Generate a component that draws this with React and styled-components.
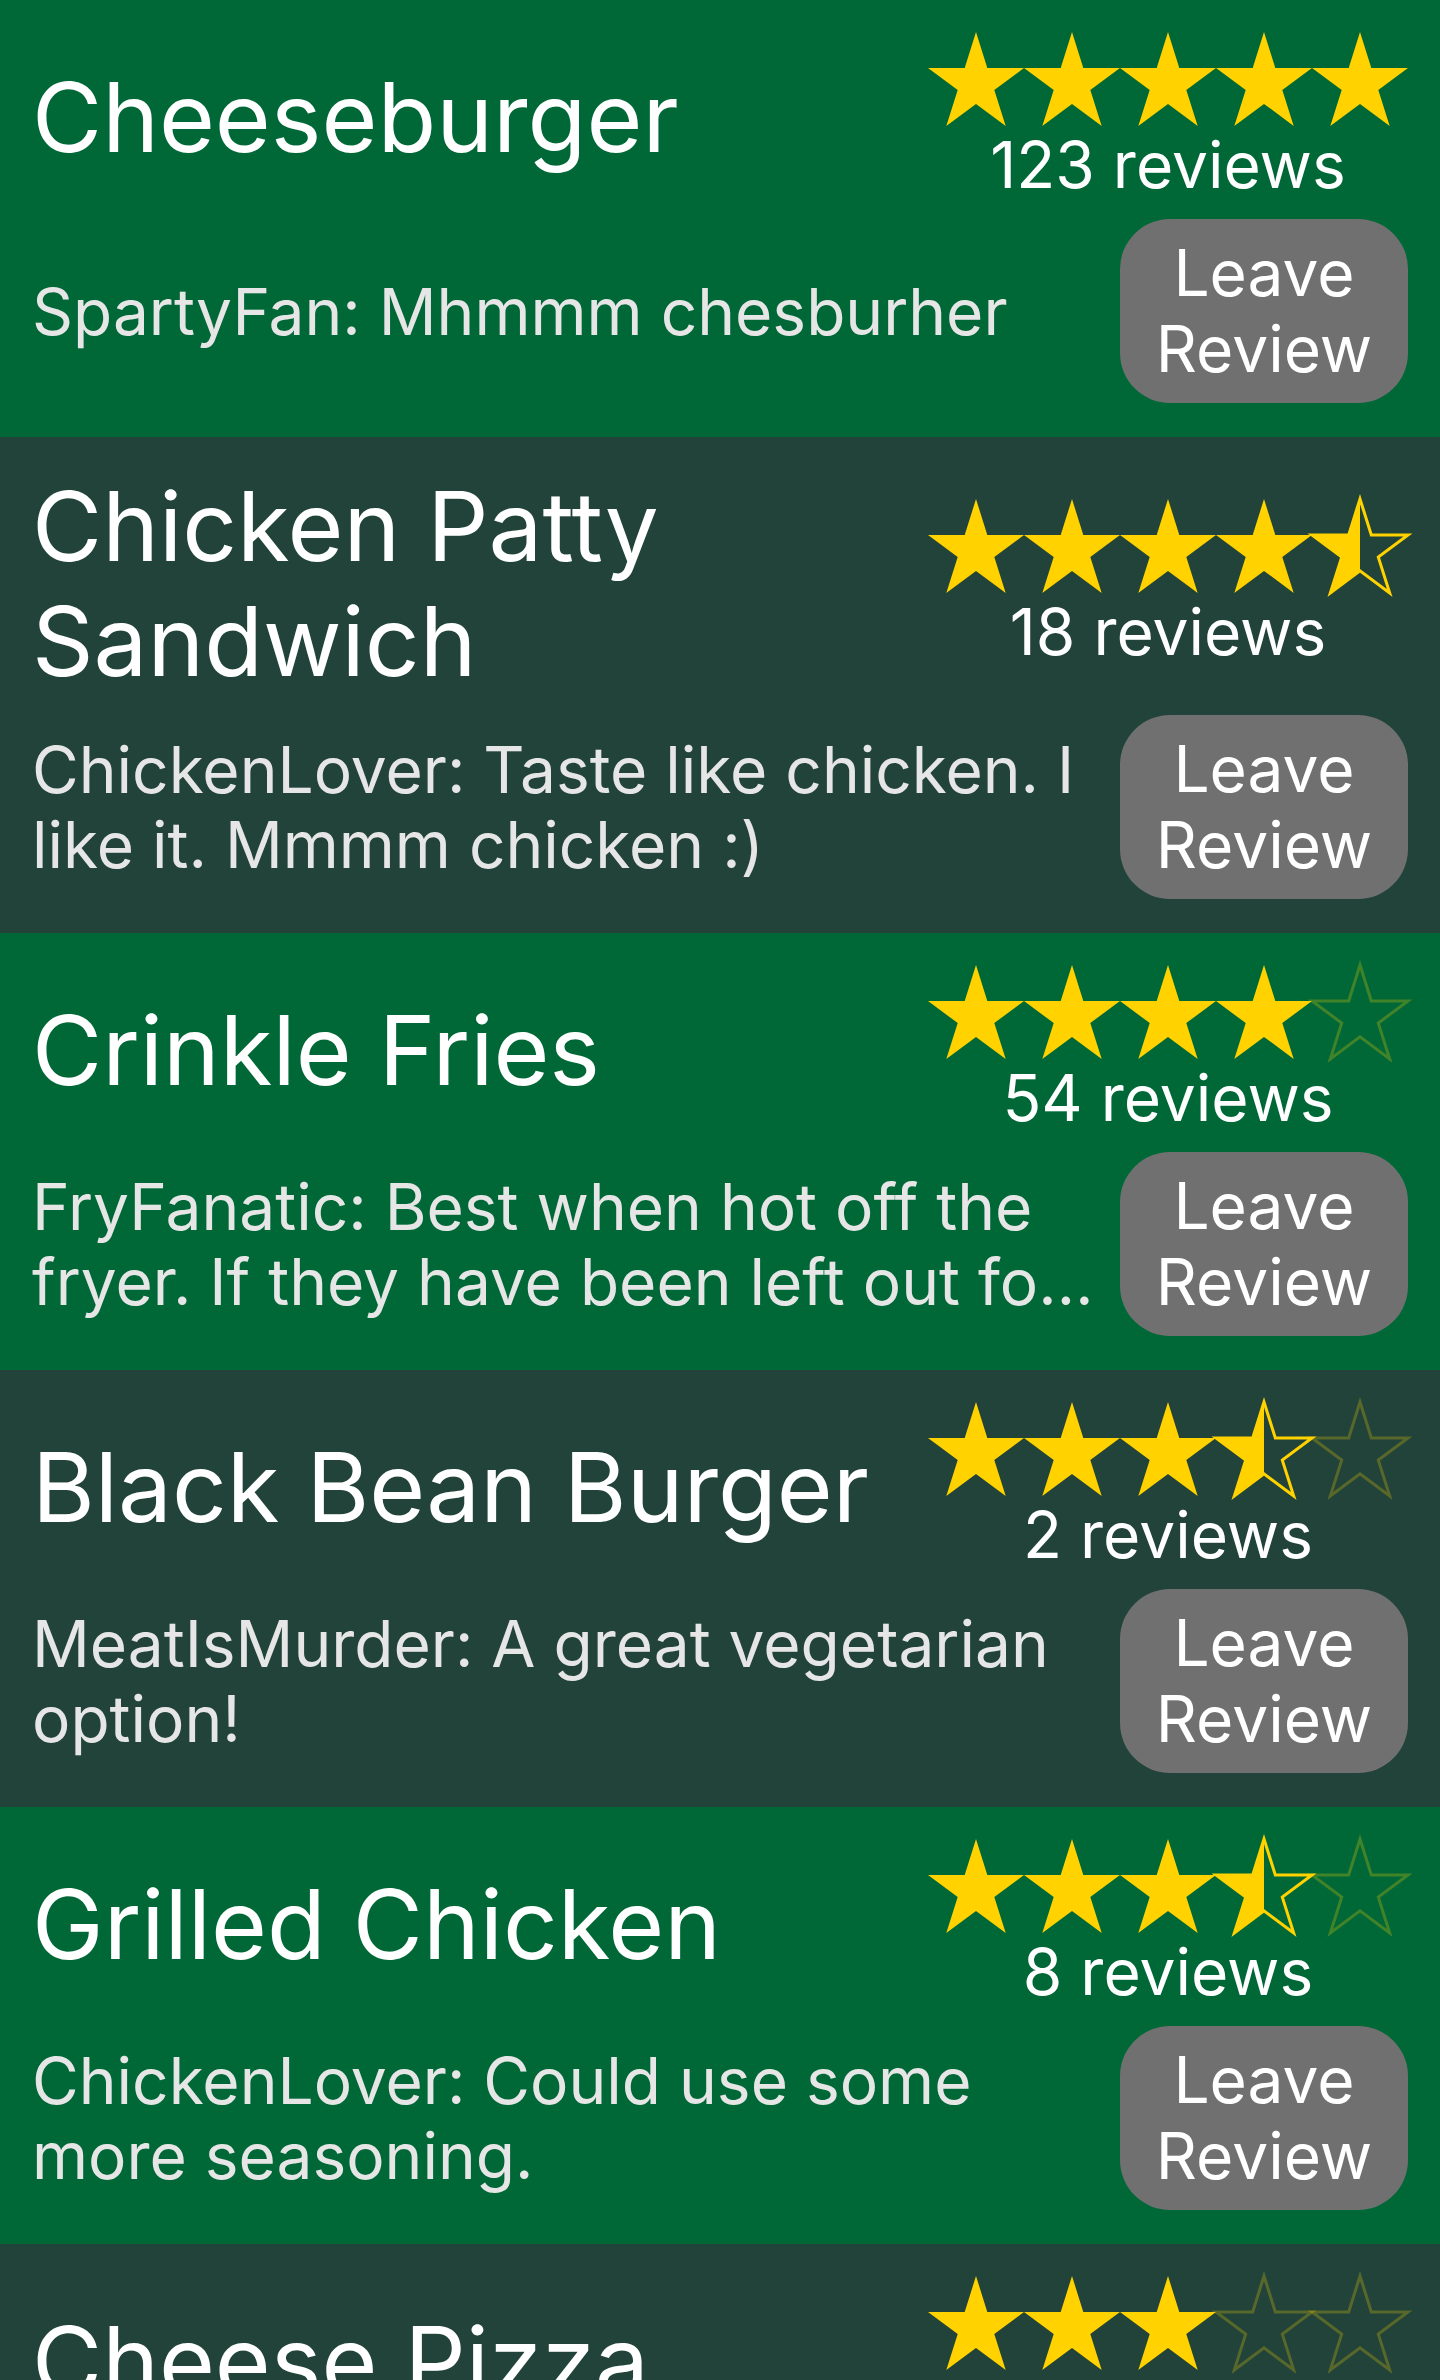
import React from 'react'
import styled, { createGlobalStyle } from 'styled-components'

const GlobalStyle = createGlobalStyle`
  body {
    margin: 0;
    font-family: Inter, "Noto Sans", sans-serif;
    background: #214339;
  }
`

const List = styled.div`
  display: flex;
  flex-direction: column;
`

const Item = styled.div`
  display: flex;
  flex-direction: column;
  gap: 16px;
  padding: 32px 32px 34px 32px;
  background: ${props => (props.$dark ? '#214339' : '#006837')};
`

const TopRow = styled.div`
  display: flex;
  align-items: center;
  justify-content: space-between;
  gap: 24px;
`

const Title = styled.h2`
  flex: 1;
  margin: 0;
  font-size: 96px;
  font-weight: 400;
  line-height: 1.2;
  color: #ffffff;
`

const Rating = styled.div`
  display: flex;
  flex-direction: column;
  align-items: center;
`

const Stars = styled.div`
  display: flex;
  height: 94px;
`

const Count = styled.div`
  font-size: 64px;
  line-height: 77px;
  color: #ffffff;
`

const BottomRow = styled.div`
  display: flex;
  align-items: center;
  gap: 24px;
`

const Review = styled.p`
  flex: 1;
  margin: 0;
  font-size: 64px;
  line-height: 75px;
  color: #e6e6e6;
  display: -webkit-box;
  -webkit-line-clamp: 2;
  -webkit-box-orient: vertical;
  overflow: hidden;
`

const ReviewButton = styled.button`
  width: 288px;
  height: 184px;
  padding: 0 20px;
  border: none;
  border-radius: 50px;
  background: #707070;
  color: #ffffff;
  font-family: Inter, "Noto Sans", sans-serif;
  font-size: 64px;
  line-height: 76px;
  text-align: center;
  cursor: pointer;
`

const GOLD = '#ffd200'
const POINTS =
  '48,0 59.3,35.9 96,35.9 66.3,58.1 77.7,94 48,71.9 18.3,94 29.7,58.1 0,35.9 36.7,35.9'

function Star({ kind, id }) {
  return (
    <svg width="96" height="94" viewBox="0 0 96 94" style={{ overflow: 'visible' }}>
      {kind === 'full' && <polygon points={POINTS} fill={GOLD} />}
      {kind === 'empty' && (
        <polygon points={POINTS} fill="none" stroke={GOLD} strokeOpacity="0.25" strokeWidth="3" />
      )}
      {kind === 'half' && (
        <>
          <defs>
            <clipPath id={id}>
              <rect x="0" y="0" width="48" height="94" />
            </clipPath>
          </defs>
          <polygon points={POINTS} fill={GOLD} clipPath={`url(#${id})`} />
          <polygon points={POINTS} fill="none" stroke={GOLD} strokeWidth="3" />
        </>
      )}
    </svg>
  )
}

function StarRow({ rating, name }) {
  const stars = []
  for (let i = 1; i <= 5; i++) {
    let kind = 'empty'
    if (rating >= i) kind = 'full'
    else if (rating >= i - 0.5) kind = 'half'
    stars.push(<Star key={i} kind={kind} id={`half-${name}-${i}`} />)
  }
  return <Stars>{stars}</Stars>
}

const foods = [
  { name: 'Cheeseburger', rating: 5, reviews: 123, review: 'SpartyFan: Mhmmm chesburher' },
  { name: 'Chicken Patty Sandwich', rating: 4.5, reviews: 18, review: 'ChickenLover: Taste like chicken. I like it. Mmmm chicken :)' },
  { name: 'Crinkle Fries', rating: 4, reviews: 54, review: 'FryFanatic: Best when hot off the fryer. If they have been left out for a while they get soggy.' },
  { name: 'Black Bean Burger', rating: 3.5, reviews: 2, review: 'MeatIsMurder: A great vegetarian option!' },
  { name: 'Grilled Chicken', rating: 3.5, reviews: 8, review: 'ChickenLover: Could use some more seasoning.' },
  { name: 'Cheese Pizza', rating: 3, reviews: 41, review: 'PizzaPal: Cheesy and warm, just how I like it.' },
]

export default function App() {
  return (
    <>
      <GlobalStyle />
      <List>
        {foods.map((food, i) => (
          <Item key={food.name} $dark={i % 2 === 1}>
            <TopRow>
              <Title>{food.name}</Title>
              <Rating>
                <StarRow rating={food.rating} name={i} />
                <Count>{food.reviews} reviews</Count>
              </Rating>
            </TopRow>
            <BottomRow>
              <Review>{food.review}</Review>
              <ReviewButton>Leave Review</ReviewButton>
            </BottomRow>
          </Item>
        ))}
      </List>
    </>
  )
}
